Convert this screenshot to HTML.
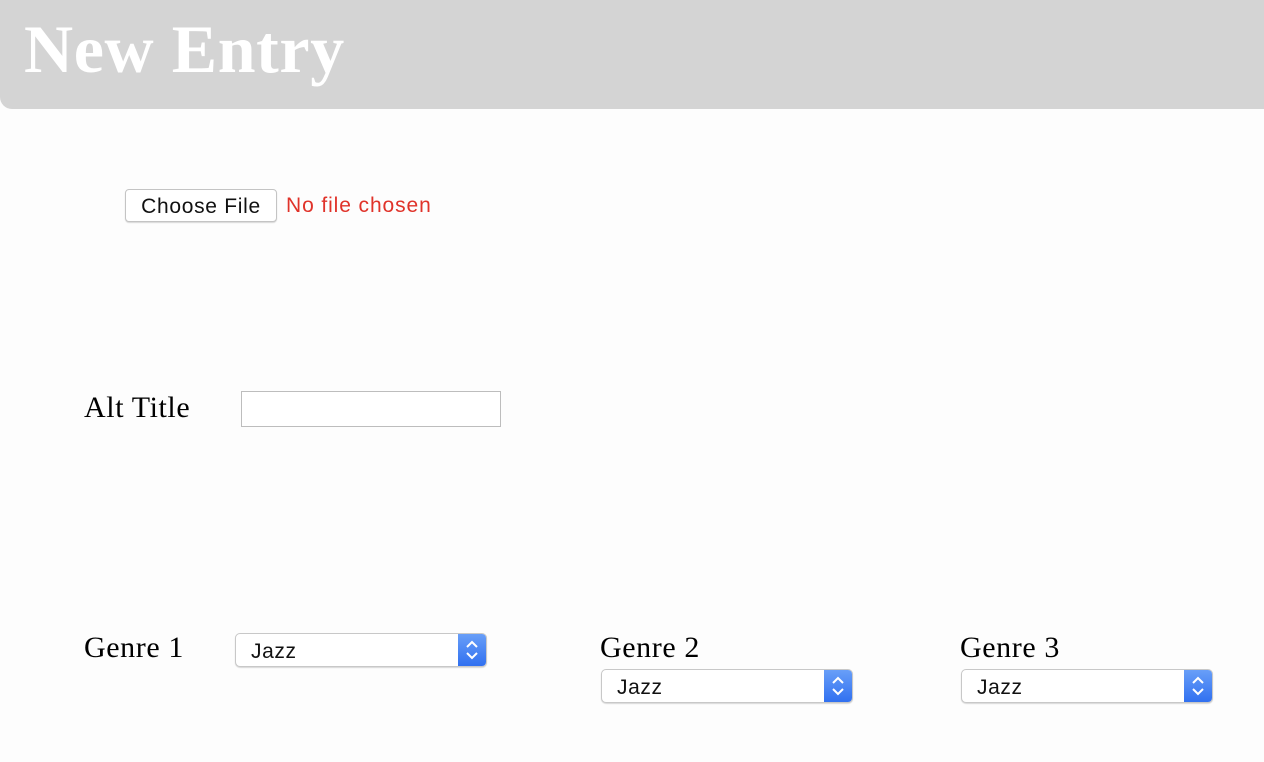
<!DOCTYPE html>
<html><head><style>
body{margin:0;width:1264px;height:762px;background:#fdfdfd;position:relative;overflow:hidden;font-family:"Liberation Serif",serif;}
.hdr{position:absolute;left:0;top:0;width:1264px;height:109px;background:#d4d4d4;border-bottom-left-radius:12px;}
.hdr h1{position:absolute;left:24px;top:5px;margin:0;font-size:68px;font-weight:bold;color:#fff;line-height:88px;letter-spacing:0.6px;}
.abs{position:absolute;}
.btn{left:125px;top:189px;width:152px;height:33px;box-sizing:border-box;border:1px solid #c4c4c4;border-radius:4px;background:#fff;box-shadow:0 1px 1px rgba(0,0,0,.15);font:21px "Liberation Sans",sans-serif;letter-spacing:0.7px;text-align:center;line-height:34px;color:#111;}
.nf{left:286px;top:194px;font:21px "Liberation Sans",sans-serif;letter-spacing:0.9px;color:#e0332a;}
.lbl{font-size:30px;color:#000;letter-spacing:0.6px;}
.inp{left:241px;top:391px;width:260px;height:36px;box-sizing:border-box;border:1px solid #bdbdbd;background:#fff;}
.sel{width:252px;height:34px;box-sizing:border-box;border:1px solid #c8c8c8;border-radius:5px;background:#fff;box-shadow:0 1px 1px rgba(0,0,0,.15);font:21px "Liberation Sans",sans-serif;letter-spacing:0.6px;overflow:hidden;}
.sel span{position:absolute;left:15px;top:6px;color:#111;}
.sel i{position:absolute;right:-1px;top:-1px;width:29px;height:34px;background:linear-gradient(#6aa0f8,#2f6ff0);border-radius:0 5px 5px 0;}
</style></head><body>
<div class="hdr"><h1>New Entry</h1></div>
<div class="abs btn">Choose File</div>
<div class="abs nf">No file chosen</div>
<div class="abs lbl" style="left:84px;top:391px">Alt Title</div>
<div class="abs inp"></div>
<div class="abs lbl" style="left:84px;top:631px">Genre 1</div>
<div class="abs sel" style="left:235px;top:633px"><span>Jazz</span><i><svg width="29" height="34" viewBox="0 0 29 34"><path d="M9 14l5-5 5 5M9 20l5 5 5-5" stroke="#fff" stroke-width="2" fill="none"/></svg></i></div>
<div class="abs lbl" style="left:600px;top:631px">Genre 2</div>
<div class="abs sel" style="left:601px;top:669px"><span>Jazz</span><i><svg width="29" height="34" viewBox="0 0 29 34"><path d="M9 14l5-5 5 5M9 20l5 5 5-5" stroke="#fff" stroke-width="2" fill="none"/></svg></i></div>
<div class="abs lbl" style="left:960px;top:631px">Genre 3</div>
<div class="abs sel" style="left:961px;top:669px"><span>Jazz</span><i><svg width="29" height="34" viewBox="0 0 29 34"><path d="M9 14l5-5 5 5M9 20l5 5 5-5" stroke="#fff" stroke-width="2" fill="none"/></svg></i></div>
</body></html>
